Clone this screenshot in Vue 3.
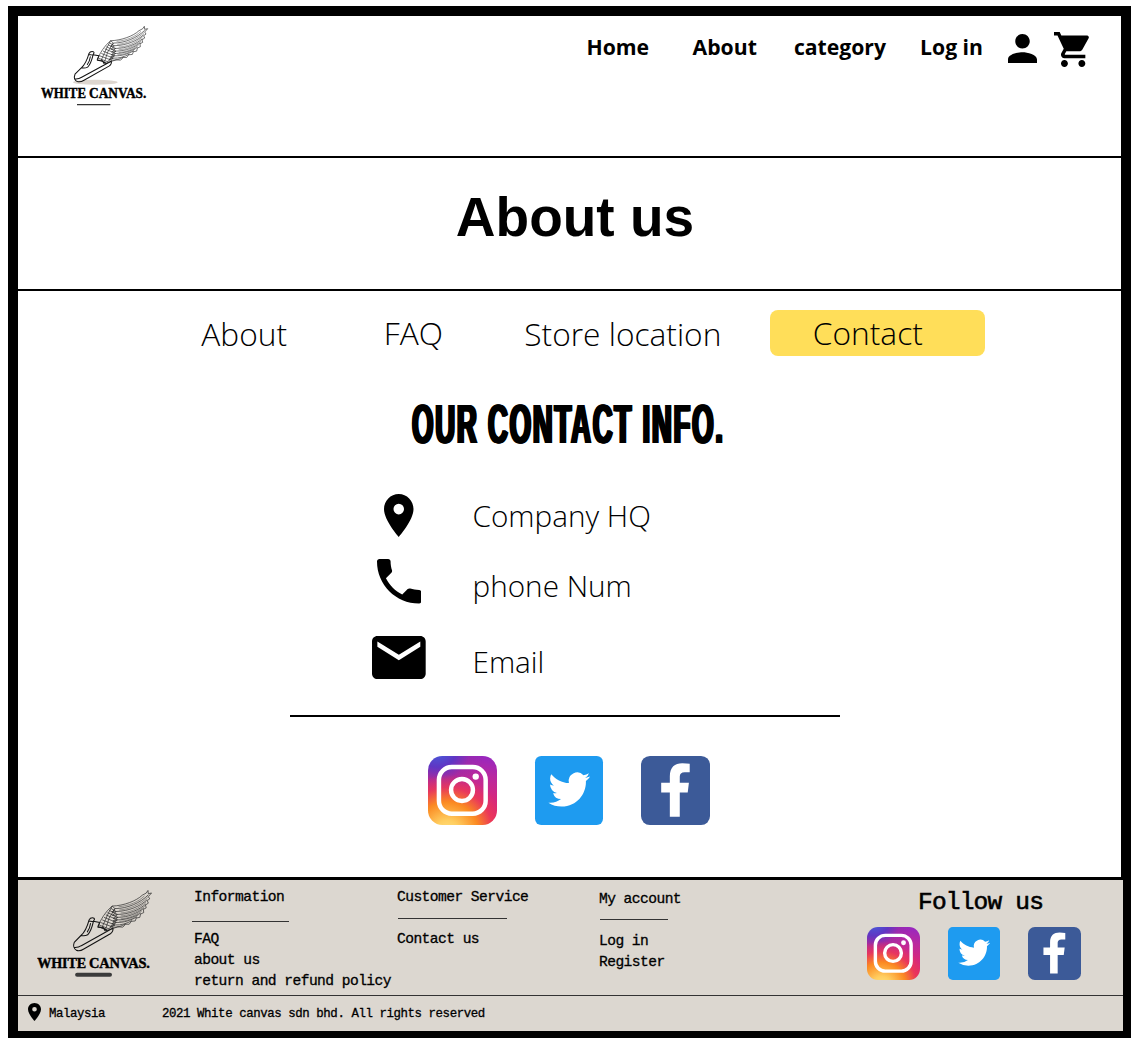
<script setup>
const nav = [
  { label: 'Home', gap: 43.5 },
  { label: 'About', gap: 37 },
  { label: 'category', gap: 34 },
  { label: 'Log in', gap: 25 },
]

const contacts = [
  { id: 'place', label: 'Company HQ', box: '5 2 14 20', w: 29.5, h: 43, d: 'M12 2C8.13 2 5 5.13 5 9c0 5.25 7 13 7 13s7-7.75 7-13c0-3.87-3.13-7-7-7zm0 9.5a2.5 2.5 0 010-5 2.5 2.5 0 010 5z' },
  { id: 'phone', label: 'phone Num', box: '3 3 18 18', w: 44.5, h: 44.5, d: 'M6.62 10.79c1.44 2.83 3.76 5.14 6.59 6.59l2.2-2.2c.27-.27.67-.36 1.02-.24 1.12.37 2.33.57 3.57.57.55 0 1 .45 1 1V20c0 .55-.45 1-1 1-9.39 0-17-7.61-17-17 0-.55.45-1 1-1h3.5c.55 0 1 .45 1 1 0 1.25.2 2.45.57 3.57.11.35.03.74-.25 1.02l-2.2 2.2z' },
  { id: 'mail', label: 'Email', box: '2 4 20 16', w: 53.7, h: 43, d: 'M20 4H4c-1.1 0-1.99.9-1.99 2L2 18c0 1.1.9 2 2 2h16c1.1 0 2-.9 2-2V6c0-1.1-.9-2-2-2zm0 4l-8 5-8-5V6l8 5 8-5v2z' },
]

const columns = [
  { id: 'info', title: 'Information', links: ['FAQ', 'about us', 'return and refund policy'] },
  { id: 'service', title: 'Customer Service', links: ['Contact us'] },
  { id: 'account', title: 'My account', links: ['Log in', 'Register'] },
]

const socials = ['instagram', 'twitter', 'facebook']
</script>

<template>
  <svg class="sprite" width="0" height="0" aria-hidden="true">
    <symbol id="shoe" viewBox="120 75 330 245" preserveAspectRatio="none">
      <g fill="none" stroke="#111" stroke-width="3" stroke-linejoin="round" stroke-linecap="round">
        <path d="M225 222L244 203C256 193 262 178 267 160C271 152 283 153 282 159L279 164L297 167M225 222C222 230 223 240 232 244Q241 247 252 240L327 198Q336 192 334 182M225 236Q236 237 245 231L332 184M267 163L279 165M279 165C276 178 272 192 263 201Q255 205 245 203M271 170Q269 184 262 193M297 167L292 178M292 180Q306 180 318 190M306 180L312 190" />
      </g>
      <g fill="none" stroke="#222" stroke-width="1.9" stroke-linejoin="round">
        <path d="M292 178C300 158 314 136 332 122C365 121 400 108 417 92Q431 87 433 79L434 88L443 86L434 96L438 102L431 107L434 114L426 119L428 127L420 131L421 140L412 144L410 153L400 155L397 163L386 164L380 172L370 172L362 180L348 179L334 184L320 188L292 178" />
        <path d="M332 122L340 129C375 129 412 113 434 91M328 128L343 137C380 136 412 122 431 104M324 134L347 145C380 145 409 132 427 116M319 140L348 153C378 153 402 142 421 128M314 146L347 160C372 160 394 152 413 141M309 153L344 167C365 168 384 161 402 152M304 160L340 174C357 175 373 170 388 162M299 167L334 180C346 181 358 178 370 171M295 174L326 186M340 129L332 139L343 137L333 148L347 145L335 156L348 153L334 164L347 160L331 171L344 167L327 178L340 174L322 184M332 122L320 144L313 160L303 181M340 129L323 156L314 184" />
        <path d="M350 124C380 121 405 111 423 94M352 133C382 130 410 118 432 98M356 141C384 139 408 128 428 110M356 149C380 148 402 138 424 123M356 157C376 156 396 149 416 135M352 164C371 164 389 157 406 147" stroke-width="1.2" />
      </g>
    </symbol>

    <symbol id="instagram" viewBox="0 0 69 69">
      <g fill="none" stroke="#fff" stroke-width="4.5">
        <rect x="11" y="11" width="47" height="47" rx="13" />
        <circle cx="34.2" cy="34.2" r="11" />
      </g>
      <circle cx="48" cy="20.7" r="3.2" fill="#fff" />
    </symbol>
    <symbol id="twitter" viewBox="0 0 69 69">
      <path transform="translate(13.5 12.7) scale(1.75)" fill="#fff" d="M23.953 4.57a10 10 0 01-2.825.775 4.958 4.958 0 002.163-2.723c-.951.555-2.005.959-3.127 1.184a4.92 4.92 0 00-8.384 4.482C7.69 8.095 4.067 6.13 1.64 3.162a4.822 4.822 0 00-.666 2.475c0 1.71.87 3.213 2.188 4.096a4.904 4.904 0 01-2.228-.616v.06a4.923 4.923 0 003.946 4.827 4.996 4.996 0 01-2.212.085 4.936 4.936 0 004.604 3.417 9.867 9.867 0 01-6.102 2.105c-.39 0-.779-.023-1.17-.067a13.995 13.995 0 007.557 2.209c9.053 0 13.998-7.496 13.998-13.985 0-.21 0-.42-.015-.63A9.935 9.935 0 0024 4.59z" />
    </symbol>
    <symbol id="facebook" viewBox="0 0 69 69">
      <path fill="#fff" d="M29 61V36.7H20.3V27H29V20.5C29 11 34 7.2 41.5 7.2Q46 7.2 49 7.8V16.4H44C40.5 16.4 39 18 39 20.8V27H48.2L47 36.7H39V61Z" />
    </symbol>
  </svg>

  <div class="frame">
    <header class="top">
      <svg class="brand" viewBox="120 75 330 245" preserveAspectRatio="none">
        <ellipse cx="286" cy="246" rx="67" ry="7.5" fill="#ddd6cf" />
        <use href="#shoe" x="120" y="75" width="330" height="245" />
        <text class="word" x="123" y="293" textLength="135" lengthAdjust="spacingAndGlyphs">WHITE</text>
        <text class="word" x="267" y="293" textLength="172" lengthAdjust="spacingAndGlyphs">CANVAS.</text>
        <path d="M231 313H331" stroke="#333" stroke-width="3.4" />
      </svg>
      <nav class="menu">
        <a v-for="n in nav" :key="n.label" :style="{ marginRight: n.gap + 'px' }">{{ n.label }}</a>
        <svg class="person" viewBox="4 4 16 16"><path d="M12 12c2.21 0 4-1.79 4-4s-1.79-4-4-4-4 1.79-4 4 1.79 4 4 4zm0 2c-2.67 0-8 1.34-8 4v2h16v-2c0-2.66-5.33-4-8-4z" /></svg>
        <svg class="cart" viewBox="1 2 20.1 20"><path d="M7 18c-1.1 0-1.99.9-1.99 2S5.9 22 7 22s2-.9 2-2-.9-2-2-2zM1 2v2h2l3.6 7.59-1.35 2.45c-.16.28-.25.61-.25.96 0 1.1.9 2 2 2h12v-2H7.42c-.14 0-.25-.11-.25-.25l.03-.12.9-1.63h7.45c.75 0 1.41-.41 1.75-1.03l3.58-6.49A1 1 0 0020 4H5.21l-.94-2H1zm16 16c-1.1 0-1.99.9-1.99 2s.89 2 1.99 2 2-.9 2-2-.9-2-2-2z" /></svg>
      </nav>
    </header>

    <div class="banner"><h1>About us</h1></div>

    <main>
      <div class="tabs">
        <a class="t-about">About</a>
        <a class="t-faq">FAQ</a>
        <a class="t-store">Store location</a>
        <a class="t-contact">Contact</a>
      </div>

      <h2><span>OUR CONTACT INFO.</span></h2>

      <ul class="contacts">
        <li v-for="c in contacts" :key="c.id" :class="c.id">
          <span class="ico"><svg :viewBox="c.box" :width="c.w" :height="c.h" preserveAspectRatio="none"><path :d="c.d" /></svg></span>
          <span class="txt">{{ c.label }}</span>
        </li>
      </ul>

      <hr />

      <div class="social big">
        <svg v-for="s in socials" :key="s" :class="s"><use :href="'#' + s" /></svg>
      </div>
    </main>

    <footer>
      <div class="links">
        <svg class="brand-foot" viewBox="120 75 330 245" preserveAspectRatio="none">
          <use href="#shoe" x="120" y="75" width="330" height="245" />
          <text class="word" x="121" y="293" textLength="137" lengthAdjust="spacingAndGlyphs">WHITE</text>
          <text class="word" x="267" y="293" textLength="171" lengthAdjust="spacingAndGlyphs">CANVAS.</text>
          <path d="M233 311H326" stroke="#3b3b3b" stroke-width="11" stroke-linecap="round" />
        </svg>
        <section v-for="c in columns" :key="c.id" :class="c.id">
          <h3>{{ c.title }}</h3>
          <i></i>
          <a v-for="l in c.links" :key="l">{{ l }}</a>
        </section>
        <div class="follow">
          <h4>Follow us</h4>
          <div class="social small">
            <svg v-for="s in socials" :key="s" :class="s"><use :href="'#' + s" /></svg>
          </div>
        </div>
      </div>
      <div class="legal">
        <svg viewBox="5 2 14 20" preserveAspectRatio="none"><path :d="contacts[0].d" /></svg>
        <span class="country">Malaysia</span>
        <span>2021 White canvas sdn bhd. All rights reserved</span>
      </div>
    </footer>
  </div>
</template>

<style>
html,
body {
  margin: 0;
  background: #fff;
}
</style>

<style scoped>
* {
  box-sizing: border-box;
}
.sprite {
  display: block;
}
h1,
h2,
h3,
h4,
ul {
  margin: 0;
  padding: 0;
  list-style: none;
}
svg {
  display: block;
  flex: none;
}
.frame {
  width: 1123px;
  height: 1032px;
  margin: 6px 0 0 8px;
  border: 10px solid #000;
  border-bottom-width: 7px;
  background: #fff;
  color: #000;
  font-family: 'Open Sans', sans-serif;
}
.top {
  height: 142px;
  border-bottom: 2px solid #000;
  display: flex;
  justify-content: space-between;
  align-items: flex-start;
}
.brand {
  width: 110px;
  height: 82px;
  margin: 9px 0 0 22px;
}
.word {
  font: 700 43px 'Liberation Serif', serif;
  fill: #000;
  stroke: #000;
  stroke-width: 1.2px;
}
.menu {
  display: flex;
  align-items: flex-start;
  padding: 16px 32px 0 0;
  font-size: 21.2px;
  font-weight: 700;
  line-height: 30px;
  white-space: nowrap;
}
.person {
  width: 29px;
  height: 29px;
  margin: 2px 17px 0 0;
}
.cart {
  width: 35px;
  height: 35px;
}
.banner {
  height: 133px;
  border-bottom: 2px solid #000;
  text-align: center;
  padding: 27px 0 0 11px;
}
h1 {
  font: 700 55px/64px 'Liberation Sans', Arial, sans-serif;
}
main {
  height: 586px;
  display: flex;
  flex-direction: column;
}
.tabs {
  display: flex;
  margin: 19px 0 0 183.3px;
  height: 46px;
  font-size: 31.7px;
  font-weight: 300;
  line-height: 46px;
  white-space: nowrap;
}
.t-about {
  width: 182.5px;
  padding-top: 1px;
}
.t-faq {
  width: 140.5px;
}
.t-store {
  width: 246px;
  padding-top: 1px;
}
.t-contact {
  width: 215px;
  border-radius: 8px;
  background: #ffde59;
  padding-left: 42.5px;
}
h2 {
  height: 64px;
  margin: 36px 0 0 394px;
  font: 700 56px/64px 'Liberation Sans', Arial, sans-serif;
  white-space: nowrap;
}
h2 span {
  display: inline-block;
  letter-spacing: 3.6px;
  transform: scaleX(0.492);
  transform-origin: 0 0;
  text-shadow: 1.3px 0 #000, -1.3px 0 #000, 2.6px 0 #000, -2.6px 0 #000;
}
.contacts {
  margin: 38px 0 0 354px;
}
.contacts li {
  display: flex;
  align-items: flex-start;
  font-size: 29.7px;
  font-weight: 300;
  line-height: 40px;
}
.place {
  height: 65px;
}
.phone {
  height: 77px;
}
.mail {
  height: 79px;
}
.ico {
  width: 54px;
  display: flex;
  justify-content: center;
}
.txt {
  padding-left: 46.5px;
}
.place .txt {
  padding-top: 2px;
}
.phone .txt {
  padding-top: 7px;
}
.mail .txt {
  padding-top: 6px;
}
hr {
  width: 550px;
  height: 2px;
  margin: 0 0 0 272px;
  border: 0;
  background: #000;
}
.social {
  display: flex;
}
.big {
  gap: 38px;
  margin: 39px 0 0 410px;
}
.big svg {
  width: 68.6px;
  height: 68.6px;
}
.instagram {
  border-radius: 21%;
  background:
    radial-gradient(circle at 28% 112%, #ffe384 0, #ffce60 14%, #fb8a22 34%, rgba(240, 60, 80, 0.7) 50%, rgba(225, 40, 110, 0) 64%),
    radial-gradient(circle at 14% -12%, #3f68e0 0, #5f36c4 20%, rgba(140, 42, 170, 0.45) 34%, rgba(160, 42, 150, 0) 50%),
    linear-gradient(192deg, #9327c4 0, #b929a0 26%, #d42880 50%, #e0286a 80%);
}
.twitter {
  border-radius: 9%;
  background: #1e9bf0;
}
.facebook {
  border-radius: 13%;
  background: #3c5a98;
}
footer {
  width: 1105px;
  height: 154px;
  border-top: 3px solid #000;
  background: #dcd7d0;
  font-family: 'Liberation Mono', monospace;
  -webkit-text-stroke: 0.3px #000;
}
.links {
  height: 116px;
  border-bottom: 1px solid #333;
  display: flex;
  align-items: flex-start;
  font-size: 14.6px;
  letter-spacing: -0.55px;
  line-height: 21px;
}
.brand-foot {
  width: 117px;
  height: 89px;
  margin: 9px 39px 0 19px;
}
section {
  display: flex;
  flex-direction: column;
  padding-top: 7px;
  white-space: nowrap;
}
h3 {
  font-size: inherit;
  font-weight: 400;
}
section i {
  height: 1px;
  background: #333;
}
.info {
  width: 204px;
  padding-left: 1px;
}
.info i {
  width: 97px;
  margin: 13px 0 7px -2px;
}
.service {
  width: 202px;
}
.service i {
  width: 109px;
  margin: 10px 0 10px 1px;
}
.account {
  padding-top: 9px;
  width: 268px;
}
.account i {
  width: 68px;
  margin: 9px 0 11px 1px;
}
.follow h4 {
  margin: 9px 0 10px 51px;
  font-size: 24.5px;
  letter-spacing: -0.8px;
  font-weight: 400;
  line-height: 28px;
  -webkit-text-stroke-width: 0.6px;
}
.small {
  gap: 28.2px;
}
.small svg {
  width: 52.5px;
  height: 52.5px;
}
.legal {
  display: flex;
  align-items: center;
  height: 35px;
  padding-left: 10px;
  font-size: 12.4px;
  letter-spacing: -0.42px;
  line-height: 18px;
}
.legal svg {
  width: 13px;
  height: 18px;
  margin: -3px 8px 0 0;
}
.country {
  width: 113px;
}
</style>
